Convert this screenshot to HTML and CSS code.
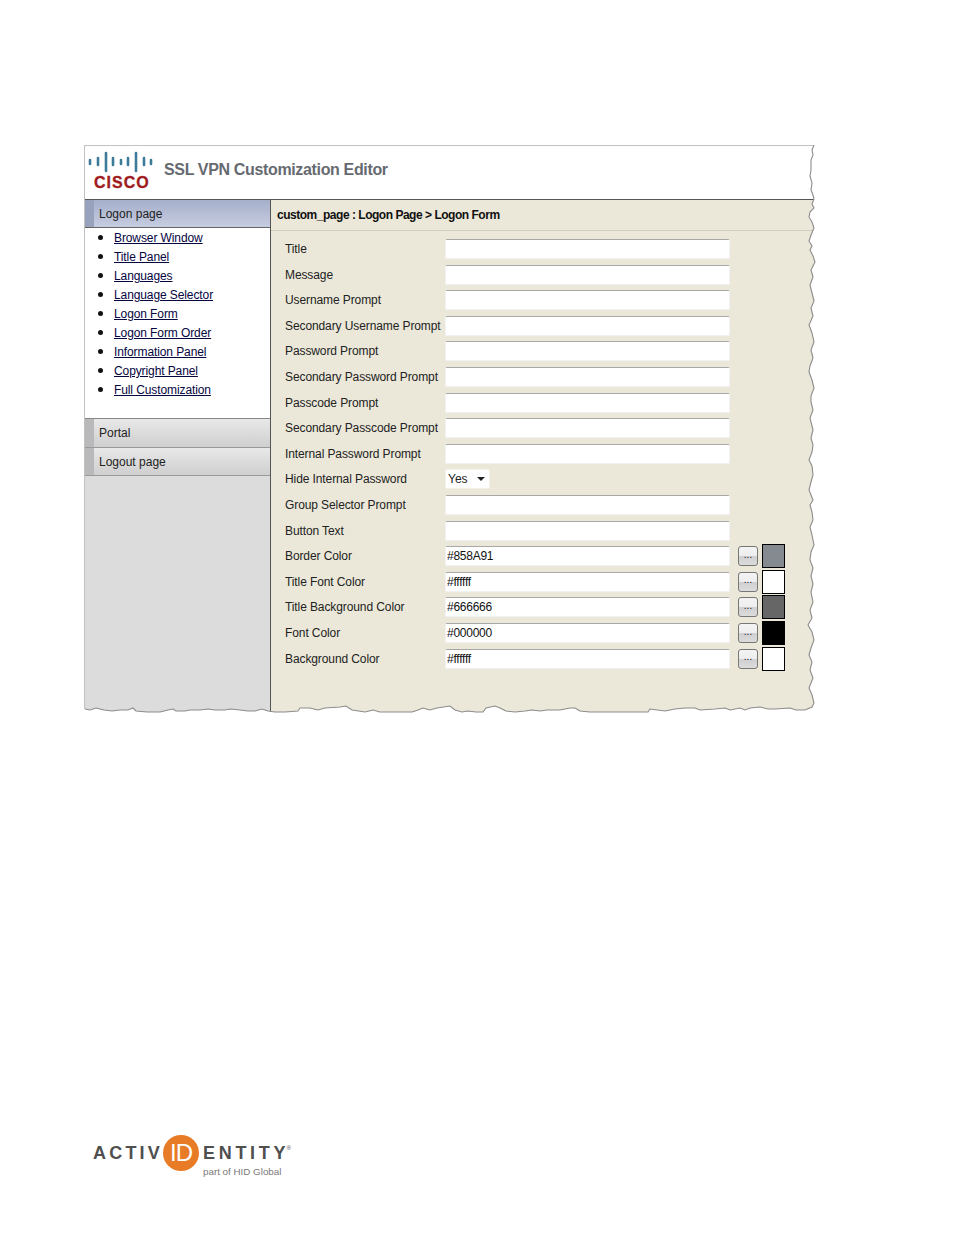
FILE: index.html
```html
<!DOCTYPE html>
<html lang="en">
<head>
<meta charset="utf-8">
<title>SSL VPN Customization Editor</title>
<link rel="stylesheet" href="styles.css">
</head>
<body>
<div class="page">
  <div class="window">
    <header class="topbar">
      <div class="cisco">
        <svg class="cisco-bars" viewBox="0 0 66 22" width="66" height="22" aria-hidden="true">
          <g stroke="#3d7b98" stroke-width="2.6" stroke-linecap="round" fill="none">
            <path d="M2 9v4M10 7v7M18 2v18M25 7v7M33 9v4M40 7v7M48 2v18M56 7v7M63 9v4"/>
          </g>
        </svg>
        <div class="cisco-name">CISCO</div>
      </div>
      <h1 class="app-title">SSL VPN Customization Editor</h1>
    </header>
    <div class="main">
      <aside class="side">
        <div class="side-head active"><span>Logon page</span></div>
        <ul class="side-list">
          <li><a href="#">Browser Window</a></li>
          <li><a href="#">Title Panel</a></li>
          <li><a href="#">Languages</a></li>
          <li><a href="#">Language Selector</a></li>
          <li><a href="#">Logon Form</a></li>
          <li><a href="#">Logon Form Order</a></li>
          <li><a href="#">Information Panel</a></li>
          <li><a href="#">Copyright Panel</a></li>
          <li><a href="#">Full Customization</a></li>
        </ul>
        <div class="side-head"><span>Portal</span></div>
        <div class="side-head"><span>Logout page</span></div>
      </aside>
      <section class="content">
        <div class="crumb">custom_page : Logon Page &gt; Logon Form</div>
        <div class="form">
          <div class="row"><label class="lbl">Title</label><input class="field" type="text"></div>
          <div class="row"><label class="lbl">Message</label><input class="field" type="text"></div>
          <div class="row"><label class="lbl">Username Prompt</label><input class="field" type="text"></div>
          <div class="row"><label class="lbl">Secondary Username Prompt</label><input class="field" type="text"></div>
          <div class="row"><label class="lbl">Password Prompt</label><input class="field" type="text"></div>
          <div class="row"><label class="lbl">Secondary Password Prompt</label><input class="field" type="text"></div>
          <div class="row"><label class="lbl">Passcode Prompt</label><input class="field" type="text"></div>
          <div class="row"><label class="lbl">Secondary Passcode Prompt</label><input class="field" type="text"></div>
          <div class="row"><label class="lbl">Internal Password Prompt</label><input class="field" type="text"></div>
          <div class="row"><label class="lbl">Hide Internal Password</label><div class="select"><span>Yes</span><i class="caret"></i></div></div>
          <div class="row"><label class="lbl">Group Selector Prompt</label><input class="field" type="text"></div>
          <div class="row"><label class="lbl">Button Text</label><input class="field" type="text"></div>
          <div class="row"><label class="lbl">Border Color</label><input class="field" type="text" value="#858A91"><button class="pick">...</button><div class="swatch" style="background:#858a91"></div></div>
          <div class="row"><label class="lbl">Title Font Color</label><input class="field" type="text" value="#ffffff"><button class="pick">...</button><div class="swatch" style="background:#ffffff"></div></div>
          <div class="row"><label class="lbl">Title Background Color</label><input class="field" type="text" value="#666666"><button class="pick">...</button><div class="swatch" style="background:#666666"></div></div>
          <div class="row"><label class="lbl">Font Color</label><input class="field" type="text" value="#000000"><button class="pick">...</button><div class="swatch" style="background:#000000"></div></div>
          <div class="row"><label class="lbl">Background Color</label><input class="field" type="text" value="#ffffff"><button class="pick">...</button><div class="swatch" style="background:#ffffff"></div></div>
        </div>
      </section>
    </div>
    <svg class="torn" viewBox="84 145 745 580" width="745" height="580" aria-hidden="true">
      <path class="torn-fill" d="M814 145L812 150 813 155 811 160 811 170 810 176 812 183 811 190 813 195 814 199 812 204 814 208 810 212 809 217 812 222 814 228 811 235 809 241 812 246 810 250 813 256 815 262 811 270 813 277 810 285 812 293 814 301 811 308 813 316 809 325 812 333 814 342 811 350 813 358 810 366 809 372 812 380 814 388 811 396 811 402 813 410 810 418 813 430 811 438 813 445 812 452 809 460 812 466 813 475 811 482 809 490 813 500 810 505 812 512 813 520 810 527 812 535 814 545 811 552 810 560 813 568 811 576 813 584 811 592 813 602 810 610 812 618 808 625 812 632 814 640 811 648 809 655 812 662 810 670 813 678 809 688 812 695 814 703 812 707 805 710 796 710 790 708 775 709 768 709 760 707 750 708 745 710 740 708 730 710 725 708 715 709 700 710 695 708 685 708 675 709 665 711 650 709 648 712 610 712 590 712 580 711 575 708 570 708 560 710 555 710 547 710 540 711 532 710 525 711 515 712 506 711 500 708 495 706 486 708 483 712 476 712 468 711 462 712 455 710 450 706 437 708 430 710 423 708 418 710 412 712 392 712 380 712 373 710 365 712 352 710 346 706 340 707 325 708 318 710 310 708 300 708 298 711 285 712 275 712 268 711 262 709 255 711 248 711 240 710 230 709 225 710 215 710 208 709 200 710 190 710 185 711 176 711 173 709 168 710 160 712 147 712 136 711 133 708 128 710 120 710 112 711 104 710 100 709 96 708 90 710 85 709 84 709 84 725 829 725 829 145Z"/>
      <polyline class="torn-line" points="814,145 812,150 813,155 811,160 811,170 810,176 812,183 811,190 813,195 814,199 812,204 814,208 810,212 809,217 812,222 814,228 811,235 809,241 812,246 810,250 813,256 815,262 811,270 813,277 810,285 812,293 814,301 811,308 813,316 809,325 812,333 814,342 811,350 813,358 810,366 809,372 812,380 814,388 811,396 811,402 813,410 810,418 813,430 811,438 813,445 812,452 809,460 812,466 813,475 811,482 809,490 813,500 810,505 812,512 813,520 810,527 812,535 814,545 811,552 810,560 813,568 811,576 813,584 811,592 813,602 810,610 812,618 808,625 812,632 814,640 811,648 809,655 812,662 810,670 813,678 809,688 812,695 814,703 812,707 805,710 796,710 790,708 775,709 768,709 760,707 750,708 745,710 740,708 730,710 725,708 715,709 700,710 695,708 685,708 675,709 665,711 650,709 648,712 610,712 590,712 580,711 575,708 570,708 560,710 555,710 547,710 540,711 532,710 525,711 515,712 506,711 500,708 495,706 486,708 483,712 476,712 468,711 462,712 455,710 450,706 437,708 430,710 423,708 418,710 412,712 392,712 380,712 373,710 365,712 352,710 346,706 340,707 325,708 318,710 310,708 300,708 298,711 285,712 275,712 268,711 262,709 255,711 248,711 240,710 230,709 225,710 215,710 208,709 200,710 190,710 185,711 176,711 173,709 168,710 160,712 147,712 136,711 133,708 128,710 120,710 112,711 104,710 100,709 96,708 90,710 85,709"/>
    </svg>
  </div>
  <footer class="brand">
    <div class="brand-line">
      <span class="brand-word">ACTIV</span><span class="brand-id">ID</span><span class="brand-word brand-word-end">ENTIT<span class="brand-last">Y</span></span><sup class="brand-reg">®</sup>
    </div>
    <div class="brand-sub">part of HID Global</div>
  </footer>
</div>
</body>
</html>
```
FILE: styles.css
```css
* { box-sizing: border-box; }
html, body { margin: 0; padding: 0; background: #fff; }
body { font-family: "Liberation Sans", Arial, sans-serif; font-size: 12px; color: #222; }
.page { width: 954px; height: 1235px; padding: 145px 0 0 84px; overflow: hidden; }

.window { position: relative; width: 745px; height: 568px; border-top: 1px solid #c2c2c2; border-left: 1px solid #c2c2c2; }
.topbar { height: 53px; display: flex; align-items: center; background: #fff; }
.cisco { width: 79px; padding: 5px 0 0 3px; height: 53px; }
.cisco-bars { display: block; }
.cisco-name { margin: 2px 0 0 6px; font-size: 16px; line-height: 16px; font-weight: 700; letter-spacing: 1px; color: #9e1b20; -webkit-text-stroke: .3px #9e1b20; }
.app-title { margin: 0 0 6px 0; font-size: 16px; letter-spacing: -.35px; font-weight: 700; color: #666a70; }

.main { display: flex; height: 514px; border-top: 1px solid #555; width: 744px; }
.side { width: 186px; background: #dcdcdc; border-right: 1px solid #555; flex: none; }
.side-head { height: 28.5px; display: flex; align-items: center; padding: .6px 0 0 14px; color: #222;
  border-bottom: 1px solid #999; background: linear-gradient(90deg, #b9b9bb 0, #b9b9bb 9px, transparent 9px), linear-gradient(#e8e8e8, #cfcfcf); }
.side-head.active { height: 28px; border-bottom: 1px solid #666; background: linear-gradient(90deg, #98a2bd 0, #98a2bd 9px, transparent 9px), linear-gradient(#a6afcb, #c6cce0); }
.side-list { margin: 0; padding: 0 0 18px 29px; height: 191px; background: #fff; border-bottom: 1px solid #888; }
.side-list li { height: 19px; line-height: 17px; }
.side-list li::marker { font-size: 15px; color: #111; }
.side-list a { color: #050540; letter-spacing: -.1px; }

.content { flex: 1; background: #ebe8d9; }
.crumb { height: 31px; padding: 8px 0 0 6px; font-weight: 700; line-height: 14px; letter-spacing: -.48px; color: #111; border-bottom: 1px solid #cfccc4; }
.form { padding: 5.3px 0 0 14px; }
.row { height: 25.6px; display: flex; align-items: center; }
.lbl { width: 160px; flex: none; white-space: nowrap; letter-spacing: -.1px; color: #222; }
.field { width: 285px; height: 20px; padding: 0 1px; font: 12px "Liberation Sans", Arial, sans-serif; letter-spacing: -.25px; color: #111; background: #fff;
  border: 1px solid #f2f2f6; border-top-color: #a8a8a8; border-radius: 2px; outline: 0; }
.select { width: 45px; height: 20px; padding-left: 2px; display: flex; align-items: center; justify-content: space-between; background: #fff; border: 1px solid #f4f2e8; border-radius: 2px; }
.caret { width: 0; height: 0; margin-right: 4px; border: 4px solid transparent; border-top: 4px solid #222; border-bottom: 0; }
.pick { width: 20px; height: 20px; margin-left: 8px; padding: 0 0 3px; font: 10px/14px "Liberation Sans", Arial, sans-serif; color: #223; border: 1px solid #777; border-radius: 3px; background: linear-gradient(#f3f3f3 0, #eeeeee 50%, #cfcfcf 51%, #dcdcdc 100%); }
.swatch { width: 23px; height: 24px; margin-left: 4px; border: 1px solid #000; }

.torn { position: absolute; left: -1px; top: -1px; pointer-events: none; }
.torn-fill { fill: #fff; }
.torn-line { fill: none; stroke: #8c8c8c; stroke-width: 1.1; }

.brand { margin: 422px 0 0 9px; width: 215px; color: #4a4a4a; }
.brand-line { display: flex; align-items: center; height: 36px; }
.brand-word { font-size: 18px; font-weight: 700; letter-spacing: 3.2px; color: #4f4f4f; }
.brand-word-end { margin-left: 4px; letter-spacing: 3.7px; }
.brand-last { letter-spacing: 0; }
.brand-id { width: 36px; height: 36px; margin-left: 0; border-radius: 50%; background: #e87b25; color: #fff; font-size: 24px; letter-spacing: -1px; font-weight: 400; line-height: 36px; text-align: center; }
.brand-reg { font-size: 6px; line-height: 8px; align-self: flex-start; margin: 9px 0 0 1px; }
.brand-sub { margin: -5px 0 0 110px; font-size: 9.8px; line-height: 11px; white-space: nowrap; color: #7a7a7a; }
```
